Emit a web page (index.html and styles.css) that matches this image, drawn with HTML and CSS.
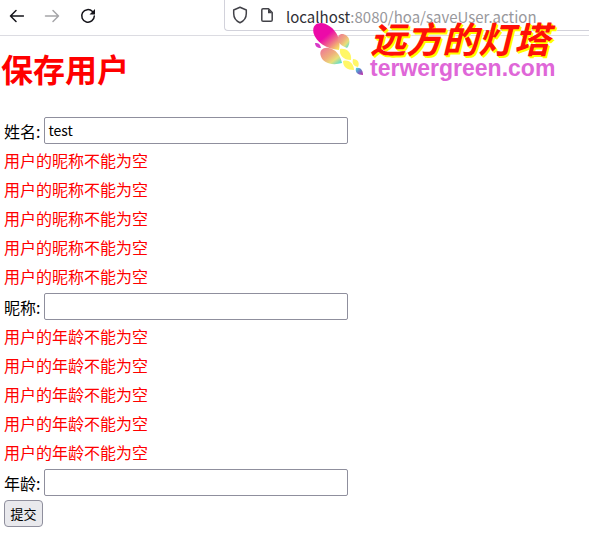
FILE: index.html
```html
<!DOCTYPE html>
<html lang="zh-CN">
<head>
<meta charset="utf-8">
<meta name="viewport" content="width=device-width, initial-scale=1">
<title>保存用户</title>
<link rel="stylesheet" href="styles.css">
</head>
<body>
<header class="toolbar">
  <nav class="nav">
    <button class="nav-button" type="button" aria-label="后退">
      <svg width="16" height="16" viewBox="0 0 16 16"><path d="M15.500 8H2.500M8 2.500 2.500 8 8 13.500"/></svg>
    </button>
    <button class="nav-button" type="button" aria-label="前进" disabled>
      <svg width="16" height="16" viewBox="0 0 16 16"><path d="M1.500 8h13M9 2.500 14.500 8 9 13.500"/></svg>
    </button>
    <button class="nav-button" type="button" aria-label="刷新">
      <svg width="16" height="16" viewBox="0 0 16 16"><path d="M12.500 3.500A6.300 6.300 0 1 0 14.300 8"/><path class="solid" d="M15 1v5.500H9.500z"/></svg>
    </button>
  </nav>
  <div class="address">
    <svg width="16" height="18" viewBox="0 0 16 18"><path d="M8 1.300 14.300 4v3.500c0 4-2.300 7.500-6.300 9.200-4-1.700-6.300-5.200-6.300-9.200V4z"/></svg>
    <svg width="14" height="16" viewBox="0 0 14 16"><path d="M3 1.800h5.500L12.200 5.500V13q0 1.300-1.300 1.300H3.100q-1.300 0-1.300-1.300V3.100Q1.800 1.800 3 1.800z"/><path class="solid" d="M8 1.800v4.400h4.200z"/></svg>
    <span class="url"><span class="host">localhost</span>:8080/hoa/saveUser.action</span>
  </div>
</header>

<div class="brand">
  <svg class="brand-mark" width="54" height="54" viewBox="0 0 54 54" aria-hidden="true">
    <defs>
      <linearGradient id="wing" x1="0.2" y1="0.1" x2="0.95" y2="1">
        <stop offset="0.4" stop-color="#ec0aa8"/><stop offset="0.75" stop-color="#f08a80"/><stop offset="1" stop-color="#f8ee5c"/>
      </linearGradient>
      <linearGradient id="petal" x1="0" y1="0" x2="1" y2="1">
        <stop offset="0" stop-color="#ee7399"/><stop offset="0.45" stop-color="#efad7d"/><stop offset="0.7" stop-color="#e8e07a"/><stop offset="1" stop-color="#30dbe8"/>
      </linearGradient>
      <linearGradient id="tip" x1="0" y1="0" x2="1" y2="1">
        <stop offset="0" stop-color="#4fe0df"/><stop offset="0.5" stop-color="#6877c8"/><stop offset="1" stop-color="#ce27a5"/>
      </linearGradient>
    </defs>
    <path fill="url(#wing)" d="M27 28C14 27 4 20 1.500 11 0 4 4 1 9 1c11 1 21 13 18 27z"/>
    <path fill="url(#petal)" d="M35 26c-8-3-11-8-8.500-12 3-4 9-1 10.500 3 1 3 0 7-2 9z"/>
    <path fill="#d83bc8" d="M3 21c4 0 5 1 6 5-4 0-6-2-6-5z"/>
    <path fill="url(#petal)" d="M30 41c-10 3-20 0-21.500-8-1-5 3-8 8-7 7 1 12 7 13.500 15z"/>
    <path fill="#fff766" d="M39 38c-8 0-12-5-11-11 7-1 12 4 11 11z"/>
    <path fill="#fff766" d="M42 48c-7 0-11-3-11-9 6-2 11 3 11 9zM46 45c-5-1-6-4-5-8 5 0 7 4 5 8z"/>
    <path fill="url(#tip)" d="M51 53c-6 0-8-3-7-7 5-1 7 3 7 7z"/>
  </svg>
  <div class="brand-words">
    <span class="brand-name">远方的灯塔</span>
    <span class="brand-site">terwergreen.com</span>
  </div>
</div>

<main class="page">
  <h1 class="title">保存用户</h1>
  <form class="form">
    <div class="row"><label for="name">姓名:</label><input class="field" id="name" type="text" value="test"></div>
    <ul class="errors">
      <li>用户的昵称不能为空</li>
      <li>用户的昵称不能为空</li>
      <li>用户的昵称不能为空</li>
      <li>用户的昵称不能为空</li>
      <li>用户的昵称不能为空</li>
    </ul>
    <div class="row"><label for="nick">昵称:</label><input class="field" id="nick" type="text"></div>
    <ul class="errors">
      <li>用户的年龄不能为空</li>
      <li>用户的年龄不能为空</li>
      <li>用户的年龄不能为空</li>
      <li>用户的年龄不能为空</li>
      <li>用户的年龄不能为空</li>
    </ul>
    <div class="row"><label for="age">年龄:</label><input class="field" id="age" type="text"></div>
    <div class="row"><button class="submit" type="submit">提交</button></div>
  </form>
</main>
</body>
</html>
```
FILE: styles.css
```css
* {
  box-sizing: border-box;
}

body {
  position: relative;
  margin: 0;
  background: #fff;
  color: #000;
  font: 16px/24px "Noto Sans CJK SC", sans-serif;
}

.toolbar {
  display: flex;
  align-items: flex-start;
  height: 36px;
  overflow: hidden;
  border-bottom: 1px solid #dcdce2;
}

.nav {
  display: flex;
  flex: 0 0 224px;
  gap: 20px;
  padding: 8px;
}

.nav-button {
  width: 16px;
  height: 16px;
  padding: 0;
  border: 0;
  background: none;
  color: #15141a;
}

.nav-button:disabled {
  color: #a5a5a8;
}

.nav-button svg,
.address svg {
  display: block;
  flex: none;
  fill: none;
  stroke: currentColor;
  stroke-width: 1.5;
  stroke-linecap: round;
  stroke-linejoin: round;
}

svg .solid {
  fill: currentColor;
  stroke: none;
}

.address {
  display: flex;
  flex: 1;
  align-items: center;
  gap: 12px;
  height: 31px;
  padding-left: 7px;
  border: 1px solid #d2d2db;
  border-width: 0 0 1px 1px;
  border-radius: 0 0 0 4px;
  color: #424248;
}

.url {
  padding-top: 3px;
  color: #98989c;
  font-size: 15px;
  white-space: nowrap;
}

.host {
  color: #303036;
}

.brand {
  position: absolute;
  top: 18px;
  left: 312px;
  display: flex;
  gap: 4px;
}

.brand-mark {
  margin-top: 4px;
}

.brand-words {
  display: flex;
  flex-direction: column;
  white-space: nowrap;
}

.brand-name {
  color: #ff1008;
  font-size: 36px;
  font-style: italic;
  font-weight: 700;
  line-height: 38px;
  text-shadow: 1px 1px #ff0, 2px 2px #ff0;
}

.brand-site {
  color: #df67d8;
  font: 700 23px/24px "Liberation Sans", sans-serif;
}

.page {
  padding: 0 4px;
}

.title {
  margin: 8px 0 24px -3px;
  color: #f00;
  font-size: 32px;
  font-weight: 700;
  line-height: 48px;
}

.form,
.errors {
  display: flex;
  flex-direction: column;
  gap: 2px;
}

.errors {
  margin: 0;
  padding: 0;
  color: #f00;
  line-height: 27px;
  list-style: none;
}

.row {
  display: flex;
  align-items: center;
  gap: 4px;
  height: 29px;
}

.field {
  flex: 0 1 304px;
  min-width: 0;
  height: 27px;
  padding: 0 3px 2px;
  border: 1px solid #8f8f9d;
  border-radius: 2px;
  background: #fff;
  color: #000;
  font: 14px "Noto Sans CJK SC", sans-serif;
}

.submit {
  min-width: 39px;
  height: 27px;
  padding: 0 5px;
  border: 1px solid #8f8f9d;
  border-radius: 4px;
  background: #e9e9ed;
  color: #000;
  font: 13px "Noto Sans CJK SC", sans-serif;
}
```
